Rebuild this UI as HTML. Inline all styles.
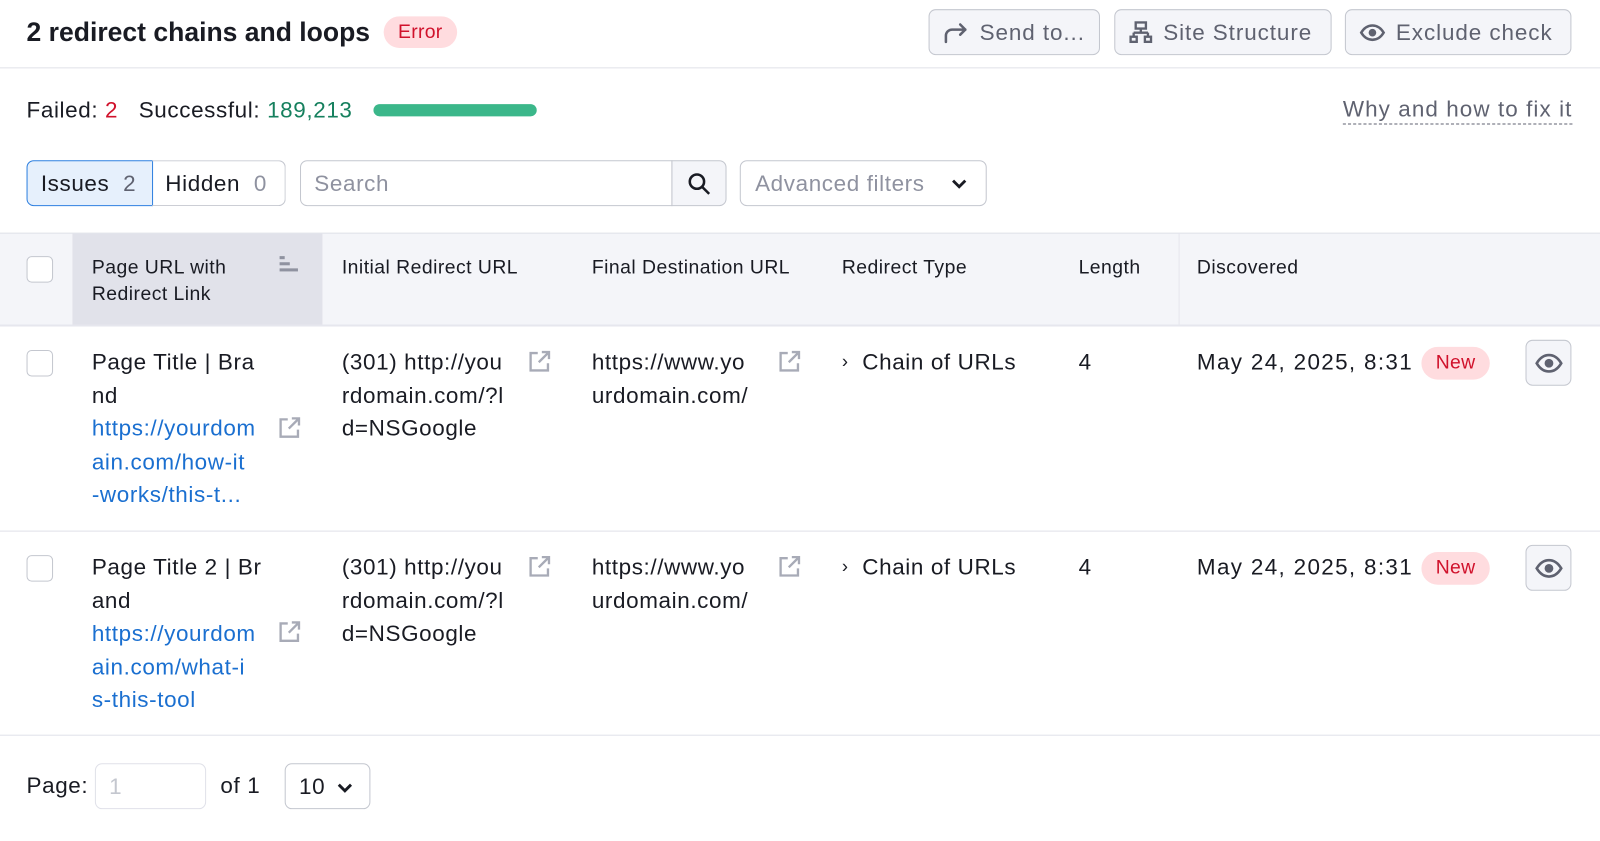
<!DOCTYPE html>
<html><head><meta charset="utf-8"><style>
*{box-sizing:border-box;margin:0;padding:0}
body{width:1600px;height:840px;background:#fff;font-family:"Liberation Sans",sans-serif;color:#191b23;position:relative;overflow:hidden;letter-spacing:0.6px}
#w{position:absolute;left:0;top:0;width:1568px;height:824px;transform:scale(1.0204);transform-origin:0 0}
.a{position:absolute;white-space:nowrap}
.btn{position:absolute;height:45px;border:1px solid #c4c7cf;border-radius:7px;background:#f4f5f9;color:#5f6270;font-size:22px;display:flex;align-items:center;gap:10px;padding:0 13px;letter-spacing:0.9px}
.t{font-size:22px;line-height:32.5px}
.h{font-size:19px;line-height:26px;color:#191b23;letter-spacing:0.45px}
.cb{position:absolute;width:26px;height:26px;border:1.5px solid #c4c7cf;border-radius:5px;background:#fff}
.link{color:#1a6fd0}
.new{position:absolute;background:#ffdcdf;color:#d0112b;font-size:19px;border-radius:16px;padding:4px 14px;line-height:24px;letter-spacing:0.3px}
.eye{position:absolute;width:45px;height:45px;border:1px solid #c4c7cf;border-radius:7px;background:#f4f5f9;display:flex;align-items:center;justify-content:center}
.ext{position:absolute}
.dt{letter-spacing:1.3px}
</style></head><body><div id="w">
<div class="a" style="left:26px;top:14px;font-size:26px;font-weight:bold;line-height:34px;letter-spacing:0">2 redirect chains and loops</div>
<div class="a" style="left:376px;top:16px;background:#ffdcdf;color:#d0112b;font-size:19px;border-radius:16px;padding:3px 14px;line-height:25px;letter-spacing:0.3px">Error</div>
<div class="btn" style="left:910px;top:9px;width:168px"><svg width="26" height="24" viewBox="0 0 26 24" fill="none" stroke="#5f6270" stroke-width="2.5" stroke-linecap="round" stroke-linejoin="round"><path d="M3 21v-6a6 6 0 0 1 6-6h13"/><path d="M17 4l5 5-5 5"/></svg>Send to...</div>
<div class="btn" style="left:1092px;top:9px;width:213px"><svg width="24" height="24" viewBox="0 0 24 24" fill="none" stroke="#5f6270" stroke-width="2.3"><rect x="7" y="2" width="10" height="6"/><path d="M12 8v4M5 12h14M5 12v4M19 12v4"/><rect x="2" y="16" width="6" height="5"/><rect x="16" y="16" width="6" height="5"/></svg>Site Structure</div>
<div class="btn" style="left:1318px;top:9px;width:222px"><svg width="26" height="24" viewBox="0 0 26 24" fill="none" stroke="#5f6270" stroke-width="2.5"><path d="M2 12c3-5 7-7 11-7s8 2 11 7c-3 5-7 7-11 7s-8-2-11-7z"/><circle cx="13" cy="12" r="2.5" fill="#5f6270"/></svg>Exclude check</div>
<div class="a" style="left:0;top:66px;width:1600px;height:1px;background:#e0e1e9"></div>

<div class="a t" style="left:26px;top:92px">Failed: <span style="color:#d0112b">2</span>&nbsp;&nbsp; Successful: <span style="color:#16805e">189,213</span></div>
<div class="a" style="left:366px;top:102px;width:160px;height:12px;border-radius:6px;background:#3bb78a"></div>
<div class="a t" style="left:1316px;top:93px;color:#5f6270;border-bottom:1.5px dashed #5f6270;line-height:28px;letter-spacing:1.05px">Why and how to fix it</div>

<div class="a" style="left:26px;top:157px;width:124px;height:45px;border:1px solid #2f80e0;background:#e6f0fc;border-radius:7px 0 0 7px;font-size:22px;line-height:43px;padding-left:13px">Issues&nbsp;&nbsp;<span style="color:#5f6270">2</span></div>
<div class="a" style="left:149px;top:157px;width:131px;height:45px;border:1px solid #c4c7cf;border-left:none;border-radius:0 7px 7px 0;font-size:22px;line-height:43px;padding-left:13px">Hidden&nbsp;&nbsp;<span style="color:#8f92a0">0</span></div>
<div class="a" style="left:294px;top:157px;width:365px;height:45px;border:1px solid #c4c7cf;border-radius:7px 0 0 7px;font-size:22px;line-height:43px;padding-left:13px;color:#8f92a0">Search</div>
<div class="a" style="left:658px;top:157px;width:54px;height:45px;border:1px solid #c4c7cf;border-radius:0 7px 7px 0;background:#f4f5f9;display:flex;align-items:center;justify-content:center"><svg width="24" height="24" viewBox="0 0 24 24" fill="none" stroke="#191b23" stroke-width="2.5"><circle cx="10" cy="10" r="7"/><path d="M15 15l7 7"/></svg></div>
<div class="a" style="left:725px;top:157px;width:242px;height:45px;border:1px solid #c4c7cf;border-radius:7px;font-size:22px;line-height:43px;padding-left:14px;color:#8f92a0">Advanced filters<svg style="position:absolute;right:18px;top:16px" width="16" height="12" viewBox="0 0 16 12" fill="none" stroke="#191b23" stroke-width="2.8"><path d="M2 3l6 6 6-6"/></svg></div>

<div class="a" style="left:0;top:228px;width:1600px;height:92px;background:#f4f5f9;border-top:1px solid #e0e1e9;border-bottom:2px solid #e6e7ee"></div>
<div class="a" style="left:71px;top:229px;width:245px;height:89px;background:#e1e2ea"></div>
<div class="cb" style="left:26px;top:251px"></div>
<div class="a h" style="left:90px;top:250px">Page URL with<br>Redirect Link</div>
<svg class="a" style="left:272px;top:250px" width="22" height="18" viewBox="0 0 22 18" fill="#8f92a0"><rect x="2" y="1" width="5" height="3"/><rect x="2" y="7" width="10" height="3"/><rect x="2" y="13" width="18" height="3"/></svg>
<div class="a h" style="left:335px;top:250px">Initial Redirect URL</div>
<div class="a h" style="left:580px;top:250px">Final Destination URL</div>
<div class="a h" style="left:825px;top:250px">Redirect Type</div>
<div class="a h" style="left:1057px;top:250px">Length</div>
<div class="a" style="left:1155px;top:229px;width:1px;height:89px;background:#e6e7ee"></div>
<div class="a h" style="left:1173px;top:250px">Discovered</div>

<!-- row 1 -->
<div class="cb" style="left:26px;top:343px"></div>
<div class="a t" style="left:90px;top:339px">Page Title | Bra<br>nd<br><span class="link">https://yourdom<br>ain.com/how-it<br>-works/this-t...</span></div>
<div class="a t" style="left:335px;top:339px">(301) http://you<br>rdomain.com/?l<br>d=NSGoogle</div>
<div class="a t" style="left:580px;top:339px">https://www.yo<br>urdomain.com/</div>
<div class="a t" style="left:825px;top:339px"><span style="font-size:18px;position:relative;top:-2px">›</span>&nbsp; Chain of URLs</div>
<div class="a t" style="left:1057px;top:339px">4</div>
<div class="a t dt" style="left:1173px;top:339px">May 24, 2025, 8:31</div>
<div class="new" style="left:1393px;top:340px">New</div>
<div class="eye" style="left:1495px;top:333px"><svg width="28" height="22" viewBox="0 0 28 22" fill="none" stroke="#5f6270" stroke-width="2.6"><path d="M2 11c3-5 7-8 12-8s9 3 12 8c-3 5-7 8-12 8s-9-3-12-8z"/><circle cx="14" cy="11" r="3" fill="#5f6270"/></svg></div>
<div class="a" style="left:0;top:520px;width:1600px;height:1px;background:#e0e1e9"></div>

<!-- row 2 -->
<div class="cb" style="left:26px;top:544px"></div>
<div class="a t" style="left:90px;top:540px">Page Title 2 | Br<br>and<br><span class="link">https://yourdom<br>ain.com/what-i<br>s-this-tool</span></div>
<div class="a t" style="left:335px;top:540px">(301) http://you<br>rdomain.com/?l<br>d=NSGoogle</div>
<div class="a t" style="left:580px;top:540px">https://www.yo<br>urdomain.com/</div>
<div class="a t" style="left:825px;top:540px"><span style="font-size:18px;position:relative;top:-2px">›</span>&nbsp; Chain of URLs</div>
<div class="a t" style="left:1057px;top:540px">4</div>
<div class="a t dt" style="left:1173px;top:540px">May 24, 2025, 8:31</div>
<div class="new" style="left:1393px;top:541px">New</div>
<div class="eye" style="left:1495px;top:534px"><svg width="28" height="22" viewBox="0 0 28 22" fill="none" stroke="#5f6270" stroke-width="2.6"><path d="M2 11c3-5 7-8 12-8s9 3 12 8c-3 5-7 8-12 8s-9-3-12-8z"/><circle cx="14" cy="11" r="3" fill="#5f6270"/></svg></div>
<div class="a" style="left:0;top:720px;width:1600px;height:1px;background:#e0e1e9"></div>

<!-- ext icons -->
<svg class="ext" style="left:272px;top:407px" width="24" height="24" viewBox="0 0 24 24" fill="none" stroke="#a8abb7" stroke-width="2.3"><path d="M10 4H3v17h17v-7"/><path d="M14 3h7v7M21 3L11 13"/></svg>
<svg class="ext" style="left:517px;top:342px" width="24" height="24" viewBox="0 0 24 24" fill="none" stroke="#a8abb7" stroke-width="2.3"><path d="M10 4H3v17h17v-7"/><path d="M14 3h7v7M21 3L11 13"/></svg>
<svg class="ext" style="left:762px;top:342px" width="24" height="24" viewBox="0 0 24 24" fill="none" stroke="#a8abb7" stroke-width="2.3"><path d="M10 4H3v17h17v-7"/><path d="M14 3h7v7M21 3L11 13"/></svg>
<svg class="ext" style="left:272px;top:607px" width="24" height="24" viewBox="0 0 24 24" fill="none" stroke="#a8abb7" stroke-width="2.3"><path d="M10 4H3v17h17v-7"/><path d="M14 3h7v7M21 3L11 13"/></svg>
<svg class="ext" style="left:517px;top:543px" width="24" height="24" viewBox="0 0 24 24" fill="none" stroke="#a8abb7" stroke-width="2.3"><path d="M10 4H3v17h17v-7"/><path d="M14 3h7v7M21 3L11 13"/></svg>
<svg class="ext" style="left:762px;top:543px" width="24" height="24" viewBox="0 0 24 24" fill="none" stroke="#a8abb7" stroke-width="2.3"><path d="M10 4H3v17h17v-7"/><path d="M14 3h7v7M21 3L11 13"/></svg>

<!-- pager -->
<div class="a t" style="left:26px;top:754px">Page:</div>
<div class="a" style="left:93px;top:748px;width:109px;height:45px;border:1px solid #e0e1e9;border-radius:7px;font-size:22px;line-height:43px;padding-left:13px;color:#c4c7cf">1</div>
<div class="a t" style="left:216px;top:754px">of 1</div>
<div class="a" style="left:279px;top:748px;width:84px;height:45px;border:1px solid #c4c7cf;border-radius:7px;font-size:22px;line-height:43px;padding-left:13px">10<svg style="position:absolute;right:16px;top:17px" width="16" height="12" viewBox="0 0 16 12" fill="none" stroke="#191b23" stroke-width="2.8"><path d="M2 3l6 6 6-6"/></svg></div>
</div></body></html>
